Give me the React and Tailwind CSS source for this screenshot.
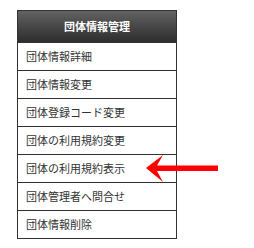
import React from "react";

const items = [
    "団体情報詳細",
    "団体情報変更",
    "団体登録コード変更",
    "団体の利用規約変更",
    "団体の利用規約表示",
    "団体管理者へ問合せ",
    "団体情報削除",
];

const App = () => {
    return (
        <div
            className="relative w-[254px] h-[248px] bg-white"
            style={{ fontFamily: '"Noto Sans CJK JP", "Noto Sans", sans-serif' }}
        >
            <div className="absolute left-[17px] top-[10px] w-[160px] border border-[#333]">
                <div className="h-[31px] flex items-center justify-center bg-gradient-to-b from-[#626262] to-[#2e2e2e] text-white font-bold text-[11px] leading-none">
                    団体情報管理
                </div>
                {items.map((item) => (
                    <div
                        key={item}
                        className="h-[28px] border-t border-[#333] flex items-center pl-[8px] text-[11px] leading-none text-[#333]"
                    >
                        {item}
                    </div>
                ))}
            </div>
            <svg
                className="absolute left-[140px] top-[150px]"
                width="80"
                height="36"
                viewBox="0 0 80 36"
            >
                <polygon
                    points="6,18 23,5 17,15.5 78,15.5 78,21 17,21 23,32"
                    fill="#ff0000"
                />
            </svg>
        </div>
    );
};

export default App;
